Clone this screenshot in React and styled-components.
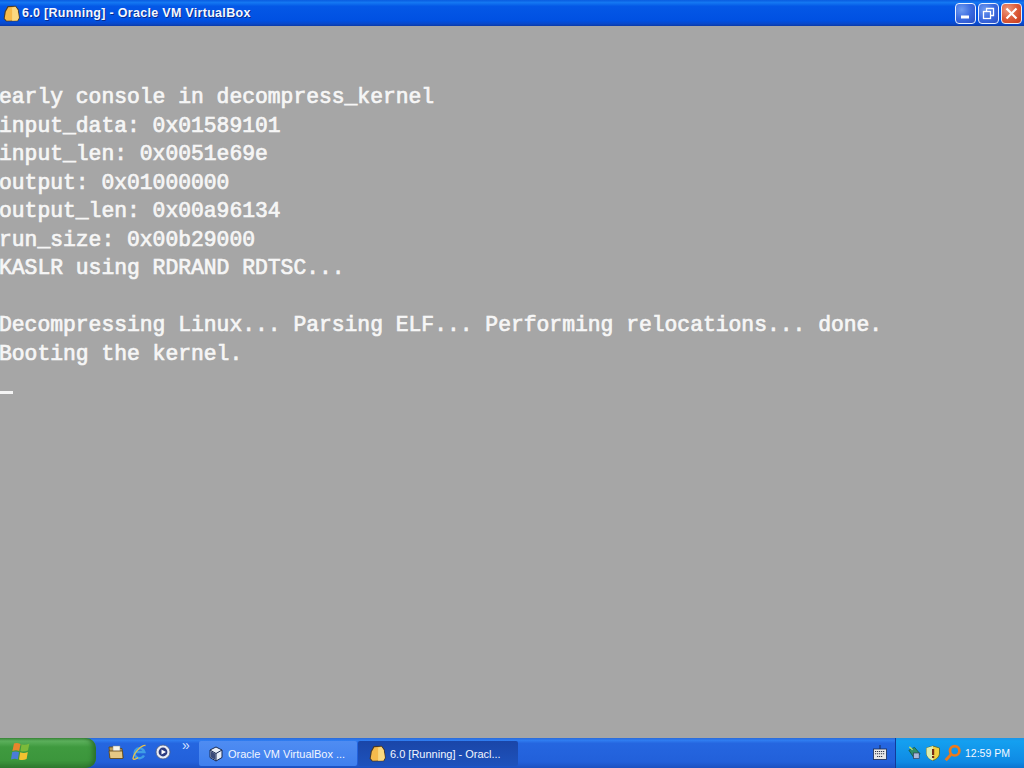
import React from "react";
import styled, { createGlobalStyle } from "styled-components";

const GlobalStyle = createGlobalStyle`
  html, body {
    margin: 0;
    padding: 0;
    width: 1024px;
    height: 768px;
    overflow: hidden;
    background: #a6a6a6;
  }
`;

const BOOT_LINES = [
  "early console in decompress_kernel",
  "input_data: 0x01589101",
  "input_len: 0x0051e69e",
  "output: 0x01000000",
  "output_len: 0x00a96134",
  "run_size: 0x00b29000",
  "KASLR using RDRAND RDTSC...",
  "",
  "Decompressing Linux... Parsing ELF... Performing relocations... done.",
  "Booting the kernel.",
];

const VmIcon = ({ size = 17 }) => (
  <svg width={size} height={size} viewBox="0 0 16 16">
    <path d="M4.4 1 L12 0.6 L14.6 4 L15.8 12 L14.2 15.4 L3 15.6 L0.6 13 L1.6 6 Z" fill="#4a3a28" />
    <path d="M5 2 L11.6 1.6 L13.8 4.6 L14.9 12 L13.6 14.6 L3.4 14.8 L1.6 12.8 L2.6 6.4 Z" fill="#f6bb4c" />
    <path d="M8.6 2.6 L11.6 1.6 L13.8 4.6 L14.9 12 L13.6 14.6 L8.6 14.8 Z" fill="#fbd980" />
  </svg>
);

const Window = styled.div`
  width: 1024px;
  height: 768px;
  display: flex;
  flex-direction: column;
  font-family: "Liberation Sans", Arial, sans-serif;
`;

const TitleBar = styled.div`
  height: 26px;
  flex: none;
  display: flex;
  align-items: center;
  padding: 0 2px 0 3px;
  background: linear-gradient(180deg, #0a5ce0 0%, #1478f2 10%, #0458e6 24%, #0050e2 80%, #0a48c8 92%, #0a3aa8 100%);
  box-sizing: border-box;
`;

const TitleText = styled.span`
  margin-left: 2px;
  flex: 1;
  color: #f4f8ff;
  font-size: 12.5px;
  font-weight: 700;
  font-family: "Liberation Sans", Arial, sans-serif;
  letter-spacing: 0.3px;
  text-shadow: 1px 1px 0 #0a2c8c;
`;

const CaptionButtons = styled.div`
  display: flex;
  gap: 2px;
  padding-top: 1px;
`;

const CaptionButton = styled.div`
  width: 21px;
  height: 21px;
  box-sizing: border-box;
  border: 1px solid #e8f0ff;
  border-radius: 4px;
  display: flex;
  align-items: center;
  justify-content: center;
  background: ${(p) =>
    p.$close
      ? "radial-gradient(circle at 30% 30%, #ec9a80 0%, #dc5c3a 50%, #c43a1c 100%)"
      : "radial-gradient(circle at 30% 30%, #6f9cf0 0%, #3a6ae0 50%, #2a4fc4 100%)"};
`;

const Console = styled.main`
  flex: 1;
  min-height: 0;
  background: #a6a6a6;
  padding-top: 57px;
  box-sizing: border-box;
`;

const ConsoleLine = styled.div`
  height: 28.5px;
  line-height: 28.5px;
  margin-left: -1px;
  font-family: "Liberation Mono", "Courier New", monospace;
  font-size: 21.33px;
  font-weight: 400;
  color: #f6f6f6;
  -webkit-text-stroke: 0.7px #f6f6f6;
  white-space: pre;
`;

const CursorRow = styled.div`
  height: 28.5px;
  display: flex;
  align-items: flex-end;
  padding-bottom: 3px;
  box-sizing: border-box;
`;

const Cursor = styled.div`
  width: 13px;
  height: 3px;
  background: #f4f4f4;
`;

const Taskbar = styled.footer`
  height: 30px;
  flex: none;
  display: flex;
  align-items: stretch;
  background: linear-gradient(180deg, #2a6ad8 0%, #2f7cf0 8%, #2566e0 18%, #2260da 80%, #1c50c0 100%);
`;

const StartButton = styled.div`
  width: 96px;
  flex: none;
  display: flex;
  align-items: center;
  padding: 0 0 3px 11px;
  box-sizing: border-box;
  border-radius: 0 10px 10px 0;
  box-shadow: inset -5px 0 5px -2px #2a6e2a;
  background: linear-gradient(180deg, #3c8a3c 0%, #5cb05c 10%, #3f9a3f 30%, #3c963c 75%, #2f7a2f 100%);
`;

const QuickLaunch = styled.div`
  width: 103px;
  flex: none;
  display: flex;
  align-items: center;
  padding: 0 0 2px 12px;
  gap: 7px;
  box-sizing: border-box;
`;

const Chevron = styled.span`
  color: #d4e2ff;
  font-size: 14px;
  margin: -14px 0 0 4px;
  font-family: "Liberation Sans", Arial, sans-serif;
`;

const TaskButton = styled.div`
  width: ${(p) => (p.$active ? "160px" : "158px")};
  flex: none;
  margin: 3px 1px 2px 0;
  display: flex;
  align-items: center;
  gap: 4px;
  padding-left: ${(p) => (p.$active ? "11px" : "9px")};
  box-sizing: border-box;
  border-radius: 2px;
  color: #f2f6ff;
  font-size: 11px;
  white-space: nowrap;
  background: ${(p) =>
    p.$active
      ? "linear-gradient(180deg, #1a46a8 0%, #1e52bc 100%)"
      : "linear-gradient(180deg, #4f8cf2 0%, #3f80ee 100%)"};
`;

const Spacer = styled.div`
  flex: 1;
`;

const KeyboardSlot = styled.div`
  width: 22px;
  flex: none;
  margin-right: 4px;
  display: flex;
  align-items: center;
  justify-content: center;
  padding-bottom: 2px;
`;

const Tray = styled.div`
  width: 129px;
  flex: none;
  display: flex;
  align-items: center;
  padding-left: 11px;
  gap: 3px;
  box-sizing: border-box;
  border-left: 1px solid #123a9a;
  background: linear-gradient(180deg, #1a94e8 0%, #14a0f0 10%, #0f8ae4 80%, #0c74d0 100%);
`;

const Clock = styled.span`
  margin-left: 0;
  color: #f4f8ff;
  font-size: 10.5px;
  white-space: nowrap;
`;

const App = () => {
  return (
    <Window>
      <GlobalStyle />
      <TitleBar>
        <VmIcon />
        <TitleText>6.0 [Running] - Oracle VM VirtualBox</TitleText>
        <CaptionButtons>
          <CaptionButton>
            <svg width="15" height="15" viewBox="0 0 15 15">
              <rect x="3" y="9.5" width="8" height="3" fill="#fff" />
            </svg>
          </CaptionButton>
          <CaptionButton>
            <svg width="15" height="15" viewBox="0 0 15 15" fill="none" stroke="#fff">
              <rect x="2.5" y="5.5" width="7" height="7" strokeWidth="1.3" />
              <path d="M5.5 5 V2.5 H12.5 V9.5 H10" strokeWidth="1.3" />
            </svg>
          </CaptionButton>
          <CaptionButton $close>
            <svg width="15" height="15" viewBox="0 0 15 15" stroke="#fff" strokeWidth="2.2">
              <path d="M2.5 2.5 L12.5 12.5 M12.5 2.5 L2.5 12.5" />
            </svg>
          </CaptionButton>
        </CaptionButtons>
      </TitleBar>

      <Console>
        {BOOT_LINES.map((line, i) => (
          <ConsoleLine key={i}>{line}</ConsoleLine>
        ))}
        <CursorRow>
          <Cursor />
        </CursorRow>
      </Console>

      <Taskbar>
        <StartButton>
          <svg width="19" height="19" viewBox="0 0 19 19">
            <path d="M3 1.5 Q6 0.5 9.5 2 L8.2 9 Q5 7.5 1.4 9 Z" fill="#e8862c" />
            <path d="M10.6 2.2 Q14 3.6 18.4 1.6 L17 8.6 Q13 10.4 9.4 9 Z" fill="#7cba3a" />
            <path d="M1.2 10 Q4.6 8.8 8 10.2 L6.8 17.4 Q3.6 16 0 17.6 Z" fill="#4a7cd8" />
            <path d="M9.2 10.3 Q13 11.8 16.8 10 L15.6 17 Q11.6 18.8 8 17.4 Z" fill="#f2c230" />
          </svg>
        </StartButton>
        <QuickLaunch>
          <svg width="16" height="16" viewBox="0 0 16 16">
            <path d="M1 3 H6 L7.5 4.5 H14 L15 14 H2 Z" fill="#b89a58" stroke="#5a4218" strokeWidth="0.8" />
            <rect x="5" y="2" width="7" height="6" fill="#f6f6ee" stroke="#8a8a80" strokeWidth="0.5" />
            <path d="M1 7 H14.5 L15 14.5 H2 Z" fill="#e6c884" stroke="#5a4218" strokeWidth="0.8" />
          </svg>
          <svg width="17" height="17" viewBox="0 0 17 17" fill="none">
            <path d="M13 11.5 A5 5 0 1 1 13.4 8 H4" stroke="#3f9ee6" strokeWidth="2.4" />
            <path d="M14.5 1.5 C11 1 3 8 2 14.5 C2.5 16 5.5 15 7 13.5" stroke="#e8c24a" strokeWidth="1.3" />
          </svg>
          <svg width="16" height="16" viewBox="0 0 16 16">
            <circle cx="8" cy="8" r="7" fill="#e8ecf4" stroke="#4a5a80" strokeWidth="0.8" />
            <circle cx="8" cy="8" r="4.4" fill="#2a3a80" />
            <path d="M6.5 5.5 L11 8 L6.5 10.5 Z" fill="#fff" />
          </svg>
          <Chevron>»</Chevron>
        </QuickLaunch>
        <TaskButton>
          <svg width="16" height="16" viewBox="0 0 16 16">
            <path d="M8 1 L14 4 V11.5 L8 15 L2 11.5 V4 Z" fill="#e8eef8" stroke="#1a2a50" strokeWidth="1" />
            <path d="M2 4 L8 7.5 L14 4 M8 7.5 V15" fill="none" stroke="#1a2a50" strokeWidth="1" />
            <path d="M2.6 4.9 L7.5 7.8 V14 L2.6 11.2 Z" fill="#3a4a78" />
          </svg>
          Oracle VM VirtualBox ...
        </TaskButton>
        <TaskButton $active>
          <VmIcon />
          6.0 [Running] - Oracl...
        </TaskButton>
        <Spacer />
        <KeyboardSlot>
          <svg width="14" height="15" viewBox="0 0 14 15">
            <path d="M7 0 V5" stroke="#1a2a50" strokeWidth="1" />
            <rect x="0.5" y="4" width="13" height="10.5" fill="#e8e8e8" stroke="#1a2a50" strokeWidth="0.8" />
            <path d="M2 6.5 H12 M2 8.8 H12 M4 11.5 H10" stroke="#33384a" strokeWidth="1.1" strokeDasharray="1.2 0.8" />
          </svg>
        </KeyboardSlot>
        <Tray>
          <svg width="15" height="16" viewBox="0 0 16 16">
            <path d="M2 5 L8 2 L14 9 L8 14 Z" fill="#2f8f6a" stroke="#14503a" strokeWidth="0.8" />
            <rect x="7" y="8" width="6" height="6" fill="#aab8d8" stroke="#2a3a60" strokeWidth="0.7" />
            <path d="M2.5 1.5 L6 4.5" stroke="#b8e070" strokeWidth="1.6" />
          </svg>
          <svg width="16" height="16" viewBox="0 0 16 16">
            <path d="M8 1 L14.5 3 V8 C14.5 12 11 14.5 8 15.5 C5 14.5 1.5 12 1.5 8 V3 Z" fill="#f2d040" stroke="#54622a" strokeWidth="0.8" />
            <path d="M8 1 V15.5 C5 14.5 1.5 12 1.5 8 V3 Z" fill="#dcecb0" />
            <rect x="7" y="4" width="2.2" height="6" fill="#7a2a14" />
            <rect x="7" y="11" width="2.2" height="2" fill="#7a2a14" />
          </svg>
          <svg width="18" height="18" viewBox="0 0 16 16" fill="none">
            <circle cx="9.5" cy="6" r="4.2" stroke="#ec7a1c" strokeWidth="2.4" />
            <path d="M6.5 9 L1.5 14.5" stroke="#ec7a1c" strokeWidth="2.6" />
          </svg>
          <Clock>12:59 PM</Clock>
        </Tray>
      </Taskbar>
    </Window>
  );
};

export default App;
